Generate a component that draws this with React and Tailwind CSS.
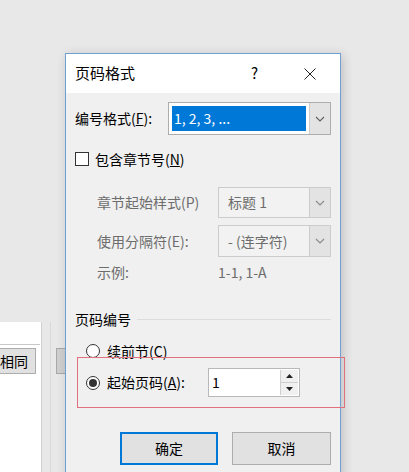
const font = { fontFamily: '"Noto Sans CJK SC", "Microsoft YaHei", sans-serif' };

function Chevron({ color = "#606060" }) {
  return (
    <svg width="10" height="6" viewBox="0 0 10 6" fill="none">
      <path d="M1 1l4 4 4-4" stroke={color} strokeWidth="1.1" />
    </svg>
  );
}

function Select({ width, height, value, disabled, selected }) {
  return (
    <div
      className={`flex border ${disabled ? "border-[#cccccc] bg-[#f2f2f2]" : "border-[#adadad] bg-white"}`}
      style={{ width, height }}
    >
      <div className="flex-1 flex items-center p-[3px]">
        {selected ? (
          <div className="h-full w-full bg-[#0078d7] text-white flex items-center pl-[2px] text-[14px]">{value}</div>
        ) : (
          <span className="pl-[6px] text-[14px] text-[#6d6d6d]">{value}</span>
        )}
      </div>
      <div className="w-[21px] border-l border-[#cccccc] bg-[#e3e3e3] flex items-center justify-center">
        <Chevron color={disabled ? "#8a8a8a" : "#606060"} />
      </div>
    </div>
  );
}

function Radio({ checked }) {
  return (
    <div className="w-[14px] h-[14px] rounded-full border border-[#333333] bg-white flex items-center justify-center">
      {checked && <div className="w-[8px] h-[8px] rounded-full bg-[#333333]" />}
    </div>
  );
}

export default function App() {
  return (
    <div className="relative w-[409px] h-[472px] overflow-hidden bg-[#e8e8e8]" style={font}>
      {/* document behind the dialog */}
      <div className="absolute left-0 top-[322px] w-[42px] h-[150px] bg-white border-r border-[#d0d0d0]">
        <div className="mt-[22px] h-px w-[40px] bg-[#c8c8c8]" />
        <div className="mt-[3px] w-[36px] h-[26px] bg-[#e1e1e1] border border-[#adadad] border-l-0 flex items-center text-[14px] text-black leading-none">
          相同
        </div>
      </div>
      <div className="absolute left-[50px] top-[322px] w-px h-[150px] bg-[#d8d8d8]" />
      <div className="absolute left-[56px] top-[348px] w-[10px] h-[26px] bg-[#cfcfcf] border border-[#a8a8a8]" />

      {/* dialog */}
      <div className="absolute left-[65px] top-[53px] w-[276px] h-[440px] border border-[#6f9fd3] bg-[#f0f0f0] shadow-[2px_2px_10px_rgba(0,0,0,0.18)] text-[14px] text-black">
        <div className="h-[39px] bg-white flex items-center pl-[9px] pr-[24px]">
          <span className="text-[15px] flex-1">页码格式</span>
          <span className="text-[15px] mr-[46px]">?</span>
          <svg width="12" height="12" viewBox="0 0 12 12">
            <path d="M0.5 0.5l11 11M11.5 0.5l-11 11" stroke="#222" strokeWidth="1" />
          </svg>
        </div>

        <div className="pl-[9px] pr-[9px]">
          <div className="mt-[9px] flex items-center h-[33px]">
            <span className="w-[93px]">
              编号格式(<span className="underline">F</span>):
            </span>
            <Select width={163} height={33} value="1, 2, 3, ..." selected />
          </div>

          <div className="mt-[10px] h-[28px] flex items-center">
            <div className="w-[14px] h-[14px] border border-[#333333] bg-white" />
            <span className="ml-[6px]">
              包含章节号(<span className="underline">N</span>)
            </span>
          </div>

          <div className="mt-[14px] h-[31px] flex items-center pl-[22px] text-[#6d6d6d]">
            <span className="w-[121px]">章节起始样式(P)</span>
            <Select width={113} height={31} value="标题 1" disabled />
          </div>

          <div className="mt-[7px] h-[32px] flex items-center pl-[22px] text-[#6d6d6d]">
            <span className="w-[121px]">使用分隔符(E):</span>
            <Select width={113} height={32} value="-  (连字符)" disabled />
          </div>

          <div className="mt-[5px] h-[20px] flex items-center pl-[22px] text-[#6d6d6d]">
            <span className="w-[121px]">示例:</span>
            <span>1-1, 1-A</span>
          </div>

          <div className="mt-[27px] h-[20px] flex items-center">
            <span>页码编号</span>
            <div className="flex-1 ml-[6px] h-px bg-[#dcdcdc]" />
          </div>

          <div className="mt-[12px] h-[20px] flex items-center pl-[11px]">
            <Radio />
            <span className="ml-[7px]">续前节(C)</span>
          </div>

          <div className="relative mt-[7px] h-[29px] flex items-center pl-[11px]">
            <div className="absolute left-[2px] -top-[11px] w-[268px] h-[51px] border border-[#e0707e]" />
            <Radio checked />
            <span className="ml-[7px] w-[101px]">
              起始页码(<span className="underline">A</span>):
            </span>
            <div className="flex h-[29px] w-[92px] border border-[#b8b8b8] bg-white">
              <span className="flex-1 flex items-center pl-[3px]">1</span>
              <div className="w-[18px] my-[1px] mr-[1px] flex flex-col border-l border-[#cfcfcf]">
                <div className="flex-1 flex items-center justify-center bg-[#f0f0f0] border-b border-[#cfcfcf]">
                  <svg width="7" height="4" viewBox="0 0 7 4"><path d="M0 4L3.5 0 7 4z" fill="#222" /></svg>
                </div>
                <div className="flex-1 flex items-center justify-center bg-[#f0f0f0]">
                  <svg width="7" height="4" viewBox="0 0 7 4"><path d="M0 0L3.5 4 7 0z" fill="#222" /></svg>
                </div>
              </div>
            </div>
          </div>

          <div className="mt-[35px] h-[33px] flex pl-[45px] gap-[14px]">
            <div className="w-[98px] h-[33px] bg-[#e1e1e1] border-2 border-[#0078d7] flex items-center justify-center">
              确定
            </div>
            <div className="w-[99px] h-[33px] bg-[#e1e1e1] border border-[#adadad] flex items-center justify-center">
              取消
            </div>
          </div>
        </div>
      </div>
    </div>
  );
}
